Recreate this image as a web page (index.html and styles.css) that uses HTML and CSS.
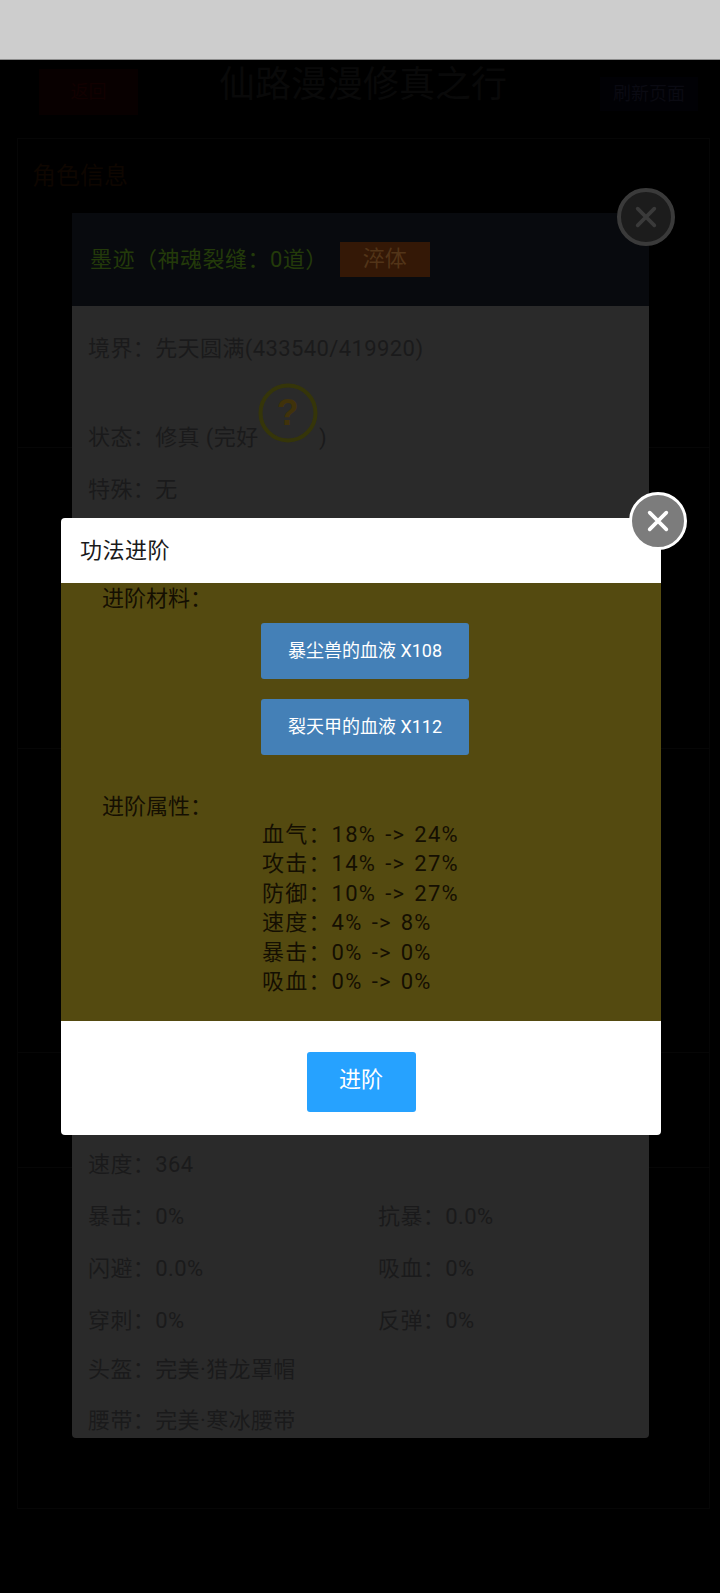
FILE: index.html
```html
<!DOCTYPE html>
<html lang="zh-CN">
<head>
    <meta charset="UTF-8">
    <meta name="viewport" content="width=device-width, initial-scale=1.0">
    <title>功法进阶</title>
    <link rel="stylesheet" href="styles.css">
</head>
<body>
    <div class="page">
        <div class="status-bar"></div>

        <!-- Game page, nearly hidden by the dark overlay -->
        <div class="top-nav">
            <div class="nav-back">返回</div>
            <div class="nav-title">仙路漫漫修真之行</div>
            <div class="nav-menu">刷新页面</div>
        </div>
        <div class="panel">
            <div class="panel-part part-first"><div class="part-label">角色信息</div></div>
            <div class="panel-part part-second"></div>
            <div class="panel-part part-third"></div>
            <div class="panel-part part-fourth"></div>
            <div class="panel-part part-last"></div>
        </div>

        <!-- Character dialog -->
        <div class="char-dialog">
            <div class="char-head">
                <span class="char-name">墨迹&#xFF08;神魂裂缝&#xFF1A;0道&#xFF09;</span>
                <span class="char-btn">淬体</span>
            </div>
            <div class="char-body">
                <div class="char-row row-realm">境界&#xFF1A;先天圆满(433540/419920)</div>
                <div class="char-row row-state">状态&#xFF1A;修真 (完好
                    <svg class="help-icon" viewBox="0 0 60 60">
                        <circle cx="30" cy="30" r="27.5" fill="none" stroke="#353509" stroke-width="4"/>
                        <text x="30" y="42" text-anchor="middle" class="help-mark">?</text>
                    </svg>
                    <span class="state-end">)</span>
                </div>
                <div class="char-row">特殊&#xFF1A;无</div>
                <div class="char-spacer"></div>
                <div class="char-row">速度&#xFF1A;364</div>
                <div class="char-row two-col"><span>暴击&#xFF1A;0%</span><span>抗暴&#xFF1A;0.0%</span></div>
                <div class="char-row two-col"><span>闪避&#xFF1A;0.0%</span><span>吸血&#xFF1A;0%</span></div>
                <div class="char-row two-col"><span>穿刺&#xFF1A;0%</span><span>反弹&#xFF1A;0%</span></div>
                <div class="char-row row-gear">头盔&#xFF1A;完美·猎龙罩帽</div>
                <div class="char-row">腰带&#xFF1A;完美·寒冰腰带</div>
            </div>
            <div class="close-btn close-dim">
                <svg viewBox="0 0 24 24"><path d="M7 7 L17 17 M17 7 L7 17"/></svg>
            </div>
        </div>

        <!-- Upgrade modal -->
        <div class="modal">
            <div class="modal-head">功法进阶</div>
            <div class="modal-body">
                <div class="modal-label">进阶材料&#xFF1A;</div>
                <div class="material-list">
                    <div class="material-btn">暴尘兽的血液 X108</div>
                    <div class="material-btn">裂天甲的血液 X112</div>
                </div>
                <div class="modal-label label-attr">进阶属性&#xFF1A;</div>
                <div class="attr-list">
                    <div>血气&#xFF1A;18% -&gt; 24%</div>
                    <div>攻击&#xFF1A;14% -&gt; 27%</div>
                    <div>防御&#xFF1A;10% -&gt; 27%</div>
                    <div>速度&#xFF1A;4% -&gt; 8%</div>
                    <div>暴击&#xFF1A;0% -&gt; 0%</div>
                    <div>吸血&#xFF1A;0% -&gt; 0%</div>
                </div>
            </div>
            <div class="modal-foot">
                <div class="upgrade-btn">进阶</div>
            </div>
            <div class="close-btn close-bright">
                <svg viewBox="0 0 24 24"><path d="M7 7 L17 17 M17 7 L7 17"/></svg>
            </div>
        </div>
    </div>
</body>
</html>
```

FILE: styles.css
```css
* {
    box-sizing: border-box;
}
body {
    margin: 0;
    background-color: #000;
    font-family: Roboto, "Noto Sans CJK SC", sans-serif;
}
.page {
    position: relative;
    width: 720px;
    height: 1593px;
    overflow: hidden;
}
.status-bar {
    height: 60px;
    background-color: #cdcdcd;
    border-bottom: 1px solid #8c8c8c;
}

/* dimmed page behind */
.top-nav {
    display: flex;
    justify-content: space-between;
    height: 78px;
    padding: 9px 22px 0 39px;
}
.nav-back {
    width: 99px;
    height: 46px;
    line-height: 46px;
    text-align: center;
    background-color: #080000;
    color: #120000;
    font-size: 18px;
}
.nav-title {
    margin: -6px 12px 0 0;
    color: #090909;
    font-size: 36px;
    line-height: 44px;
}
.nav-menu {
    width: 98px;
    height: 34px;
    margin-top: 8px;
    line-height: 34px;
    text-align: center;
    background-color: #010105;
    color: #0a0a12;
    font-size: 18px;
}
.panel {
    width: 693px;
    height: 1371px;
    margin-left: 17px;
    border: 1px solid #060606;
}
.panel-part {
    border-bottom: 1px solid #060606;
}
.part-first {
    height: 309px;
    padding: 20px 14px;
}
.part-second {
    height: 301px;
}
.part-third {
    height: 304px;
}
.part-fourth {
    height: 115px;
}
.part-last {
    border-bottom: 0;
}
.part-label {
    color: #0e0600;
    font-size: 24px;
    line-height: 34px;
}

/* character dialog */
.char-dialog {
    position: absolute;
    left: 72px;
    top: 213px;
    width: 577px;
    height: 1225px;
    border-radius: 0 0 4px 4px;
    background-color: #2a2a2a;
}
.char-head {
    display: flex;
    align-items: center;
    gap: 12px;
    height: 93px;
    padding-left: 18px;
    background-color: #080a0e;
}
.char-name {
    margin-bottom: 6px;
    color: #233a0a;
    font-size: 22px;
    letter-spacing: 0.5px;
}
.char-btn {
    width: 90px;
    height: 35px;
    line-height: 33px;
    text-align: center;
    background-color: #341806;
    color: #523418;
    font-size: 22px;
}
.char-body {
    padding: 17px 16px 0 16px;
    color: #1a1a1b;
    font-size: 22px;
    letter-spacing: 0.4px;
}
.char-row {
    height: 51.8px;
    line-height: 51.8px;
    white-space: nowrap;
}
.row-realm {
    margin-bottom: 37px;
}
.row-state {
    position: relative;
}
.row-gear {
    margin-top: -3px;
}
.help-icon {
    position: absolute;
    left: 170px;
    top: -29px;
    width: 60px;
    height: 60px;
}
.help-mark {
    fill: #40320a;
    font-family: "Liberation Sans", sans-serif;
    font-size: 36px;
    font-weight: bold;
}
.state-end {
    position: absolute;
    left: 231px;
    top: 0;
}
.char-spacer {
    height: 624px;
}
.two-col {
    display: grid;
    grid-template-columns: 290px 1fr;
}

/* close buttons */
.close-btn {
    position: absolute;
    display: flex;
    align-items: center;
    justify-content: center;
    width: 58px;
    height: 58px;
    border-radius: 50%;
}
.close-btn svg {
    width: 40px;
    height: 40px;
    fill: none;
    stroke-width: 2.2;
    stroke-linecap: round;
}
.close-dim {
    top: -25px;
    right: -26px;
    border: 4px solid #3a3a3a;
    background-color: #1c1c1c;
}
.close-dim svg {
    stroke: #3a3a3a;
}
.close-bright {
    top: -26px;
    right: -26px;
    border: 3px solid #fff;
    background-color: #7c7c7c;
}
.close-bright svg {
    stroke: #fff;
}

/* upgrade modal */
.modal {
    position: absolute;
    left: 61px;
    top: 518px;
    width: 600px;
    height: 617px;
    border-radius: 4px;
    background-color: #fff;
}
.modal-head {
    height: 65px;
    padding-left: 19px;
    line-height: 65px;
    color: #1a1a1a;
    font-size: 22px;
    letter-spacing: 0.5px;
}
.modal-body {
    height: 438px;
    padding: 3px 0 0 41px;
    background-color: #544a10;
    color: #140f02;
}
.modal-label {
    height: 26px;
    line-height: 26px;
    font-size: 22px;
}
.label-attr {
    margin-top: 39px;
}
.material-list {
    display: flex;
    flex-direction: column;
    gap: 20px;
    margin: 11px 0 0 159px;
}
.material-btn {
    width: 208px;
    height: 56px;
    line-height: 56px;
    text-align: center;
    border-radius: 3px;
    background-color: #4480b7;
    color: #fff;
    font-size: 18px;
}
.attr-list {
    margin: 0 0 0 160px;
    font-size: 22px;
    letter-spacing: 1.2px;
    word-spacing: 2.5px;
    line-height: 29.4px;
    white-space: nowrap;
}
.modal-foot {
    display: flex;
    justify-content: center;
    padding-top: 31px;
}
.upgrade-btn {
    width: 109px;
    height: 60px;
    line-height: 56px;
    text-align: center;
    border-radius: 3px;
    background-color: #26a2ff;
    color: #fff;
    font-size: 22px;
}
```
